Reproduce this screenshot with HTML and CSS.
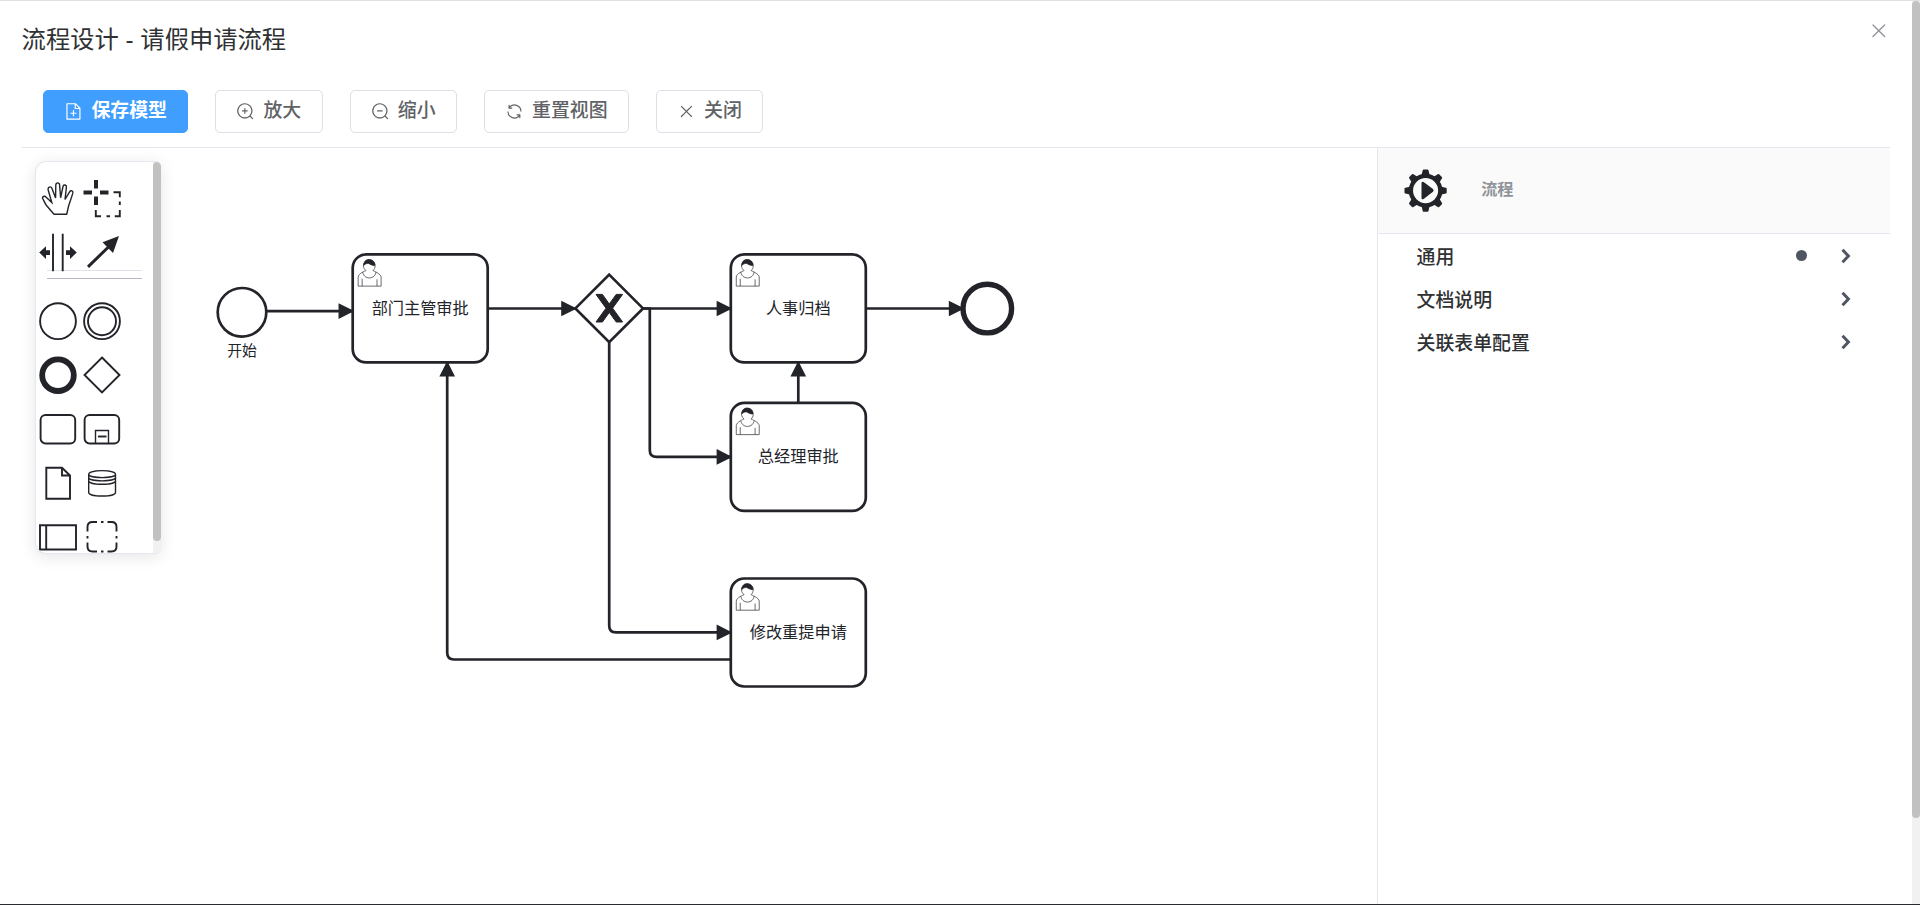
FILE: index.html
```html
<!DOCTYPE html>
<html lang="zh-CN">
<head>
    <meta charset="UTF-8" />
    <meta name="viewport" content="width=device-width, initial-scale=1.0" />
    <title>流程设计</title>
    <link rel="stylesheet" href="styles.css">
</head>
<body>
<div class="dialog">
    <div class="dialog-content">
        <header class="dialog-header">
            <h1 class="dialog-title">流程设计 - 请假申请流程</h1>
            <button class="dialog-close" aria-label="close">
                <svg viewBox="0 0 1024 1024"><path d="M764.288 214.592 512 466.88 259.712 214.592a31.936 31.936 0 0 0-45.12 45.12L466.752 512 214.528 764.224a31.936 31.936 0 1 0 45.12 45.184L512 557.184l252.288 252.288a31.936 31.936 0 0 0 45.12-45.12L557.12 512.064l252.288-252.352a31.936 31.936 0 1 0-45.12-45.184z"/></svg>
            </button>
        </header>

        <div class="toolbar">
            <button class="btn btn-primary">
                <svg viewBox="0 0 1024 1024"><path d="M832 384H576V128H192v768h640zm-26.496-64L640 154.496V320zM160 64h480l256 256v608a32 32 0 0 1-32 32H160a32 32 0 0 1-32-32V96a32 32 0 0 1 32-32m320 512V448h64v128h128v64H544v128h-64V640H352v-64z"/></svg>
                <span>保存模型</span>
            </button>
            <button class="btn">
                <svg viewBox="0 0 1024 1024"><path d="m795.904 750.72 124.992 124.928a32 32 0 0 1-45.248 45.248L750.656 795.904a416 416 0 1 1 45.248-45.248zM480 832a352 352 0 1 0 0-704 352 352 0 0 0 0 704m-32-384v-96a32 32 0 0 1 64 0v96h96a32 32 0 0 1 0 64h-96v96a32 32 0 0 1-64 0v-96h-96a32 32 0 0 1 0-64z"/></svg>
                <span>放大</span>
            </button>
            <button class="btn">
                <svg viewBox="0 0 1024 1024"><path d="m795.904 750.72 124.992 124.928a32 32 0 0 1-45.248 45.248L750.656 795.904a416 416 0 1 1 45.248-45.248zM480 832a352 352 0 1 0 0-704 352 352 0 0 0 0 704M352 448h256a32 32 0 0 1 0 64H352a32 32 0 0 1 0-64"/></svg>
                <span>缩小</span>
            </button>
            <button class="btn">
                <svg viewBox="0 0 1024 1024"><path d="M771.776 794.88A384 384 0 0 1 128 512h64a320 320 0 0 0 555.712 216.448H654.72a32 32 0 1 1 0-64h149.056a32 32 0 0 1 32 32v148.928a32 32 0 1 1-64 0v-50.56zM276.288 295.616h92.992a32 32 0 0 1 0 64H220.16a32 32 0 0 1-32-32V178.56a32 32 0 0 1 64 0v50.56A384 384 0 0 1 896.128 512h-64a320 320 0 0 0-555.776-216.384z"/></svg>
                <span>重置视图</span>
            </button>
            <button class="btn">
                <svg viewBox="0 0 1024 1024"><path d="M764.288 214.592 512 466.88 259.712 214.592a31.936 31.936 0 0 0-45.12 45.12L466.752 512 214.528 764.224a31.936 31.936 0 1 0 45.12 45.184L512 557.184l252.288 252.288a31.936 31.936 0 0 0 45.12-45.12L557.12 512.064l252.288-252.352a31.936 31.936 0 1 0-45.12-45.184z"/></svg>
                <span>关闭</span>
            </button>
        </div>

        <main class="designer">
            <div class="canvas">
                <svg class="diagram" viewBox="22 148 1355 756">
                    <defs>
                        <marker id="arrow" viewBox="0 0 20 20" refX="11" refY="10" markerWidth="27" markerHeight="27" markerUnits="userSpaceOnUse" orient="auto">
                            <path class="arrow-head" d="M 1 5 L 11 10 L 1 15 Z"/>
                        </marker>
                        <g id="user-task">
                            <rect class="shape" width="100" height="80" rx="10"/>
                            <path class="user-line" d="m 15,12 c 0.909,-0.845 1.594,-2.049 1.594,-3.385 0,-2.554 -1.805,-4.622 -4.357,-4.622 -2.552,0 -4.288,2.068 -4.288,4.622 0,1.348 0.974,2.562 1.896,3.405 -0.529,0.187 -5.669,2.097 -5.794,4.756 v 6.718 h 17 v -6.718 c 0,-2.298 -5.528,-4.595 -6.051,-4.776zm-8,6 l 0,5.5 m 11,0 l 0,-5"/>
                            <path class="user-line" d="m 15,12 m 2.162,1.009 c 0,2.447 -2.158,4.431 -4.821,4.431 -2.665,0 -4.822,-1.981 -4.822,-4.431"/>
                            <path class="user-hair" d="m 15,12 m -6.9,-3.80 c 0,0 2.251,-2.358 4.274,-1.177 2.024,1.181 4.221,1.537 4.124,0.965 -0.098,-0.57 -0.117,-3.791 -4.191,-4.136 -3.572,-0.308 -4.207,3.244 -4.207,4.348z"/>
                        </g>
                    </defs>

                    <!-- events -->
                    <circle class="event" cx="242" cy="312.3" r="24.3"/>
                    <circle class="event event-end" cx="987.3" cy="308.6" r="24.3"/>

                    <!-- gateway -->
                    <path class="event" d="M609.2 274.6 643 308.4 609.2 342.2 575.4 308.4Z"/>
                    <path class="gateway-x" d="M596 294.4h6.4l6.9 9.6 6.9-9.6h6.4l-10 13.8 10 13.8h-6.4l-6.9-9.6-6.9 9.6H596l10-13.8z"/>

                    <!-- tasks -->
                    <use href="#user-task" transform="translate(352.7 254.4) scale(1.35)"/>
                    <use href="#user-task" transform="translate(730.8 254.4) scale(1.35)"/>
                    <use href="#user-task" transform="translate(730.8 402.9) scale(1.35)"/>
                    <use href="#user-task" transform="translate(730.8 578.5) scale(1.35)"/>

                    <!-- sequence flows -->
                    <path class="flow" d="M266.3 311.1H352.7"/>
                    <path class="flow" d="M487.7 308.5H575.4"/>
                    <path class="flow" d="M643 308.5H730.8"/>
                    <path class="flow" d="M865.8 308.5H963"/>
                    <path class="flow" d="M643 308.5H649.8V450.2Q649.8 456.9 656.6 456.9H730.8"/>
                    <path class="flow" d="M609.2 342.2V625.7Q609.2 632.4 616 632.4H730.8"/>
                    <path class="flow" d="M798.3 402.9V362.4"/>
                    <path class="flow" d="M730.8 659.5H454Q447.2 659.5 447.2 652.8V362.4"/>

                    <text class="event-label" x="242" y="355.8">开始</text>
                    <text class="task-label" x="420.2" y="314">部门主管审批</text>
                    <text class="task-label" x="798.3" y="314">人事归档</text>
                    <text class="task-label" x="798.3" y="462">总经理审批</text>
                    <text class="task-label" x="798.3" y="638">修改重提申请</text>
                </svg>

                <div class="palette">
                    <div class="palette-entries">
                        <div class="palette-group">
                            <svg class="entry" viewBox="0 0 40 40"><path class="line thin" d="M16 35.2 8.5 26.5C6.8 24.4 5.7 21 4.7 19.6 3.7 17.6 6.7 16.5 8.2 18.2L13.8 23.5 10.2 11C9.5 8 12.8 6.6 14 9.6L17.6 19 17.8 6C18 3.1 21.4 3.1 21.6 6L22.6 18.8 25 7.5C25.6 5 28.8 5.6 28.4 8.5L27 20.5 31.6 12.8C32.8 10.8 35.6 11.8 34.8 14.4L30.6 27 28.7 35.2Z"/></svg>
                            <svg class="entry" viewBox="0 0 40 40"><path class="fill" d="M12 1h4v8.5h-4zM12 17.5h4V26h-4zM1.5 11.5H10v4H1.5zM18 11.5h8.5v4H18z"/><path class="line" d="M31.5 13.2h6.3v5M37.8 22.5V26M37.8 31v6.3h-5M28 37.3h-3.5M19 37.3h-5.2V31"/></svg>
                            <svg class="entry" viewBox="0 0 40 40"><path class="line" d="M15 .8v37.4M24.7.8v37.4"/><path class="fill" d="M1.2 19.5 8 13.3v4h4v4.6H8v4zM38.8 19.5 32 13.3v4h-4v4.6h4v4z"/></svg>
                            <svg class="entry" viewBox="0 0 40 40"><path class="line bold" d="M6 33.8 28 12.5"/><path class="fill" d="M37 3 31 20 20.5 9.3z"/></svg>
                        </div>
                        <hr class="separator">
                        <div class="palette-group">
                            <svg class="entry" viewBox="0 0 40 40"><circle class="line" cx="20" cy="20.2" r="17.9"/></svg>
                            <svg class="entry" viewBox="0 0 40 40"><circle class="line" cx="20" cy="20.2" r="17.9"/><circle class="line" cx="20" cy="20.2" r="14"/></svg>
                            <svg class="entry" viewBox="0 0 40 40"><circle class="line heavy" cx="20" cy="20.2" r="15.8"/></svg>
                            <svg class="entry" viewBox="0 0 40 40"><path class="line" d="M20 2.5 37.5 20 20 37.5 2.5 20Z"/></svg>
                            <svg class="entry" viewBox="0 0 40 40"><rect class="line" x="2.6" y="6" width="34.6" height="28.5" rx="5"/></svg>
                            <svg class="entry" viewBox="0 0 40 40"><rect class="line" x="2.6" y="6" width="34.6" height="28.5" rx="5"/><path class="line thin" d="M13.5 34.5V21.5H26.5V34.5"/><path class="line" d="M16 27.5h8.5"/></svg>
                            <svg class="entry" viewBox="0 0 40 40"><path class="line" d="M8.3 4.7H24L32 12.5V35.7H8.3ZM24 4.7v7.8h8"/></svg>
                            <svg class="entry" viewBox="0 0 40 40"><path class="line thin" d="M6.7 11.5V29.5C6.7 34.2 33.5 34.2 33.5 29.5V11.5C33.5 6.3 6.7 6.3 6.7 11.5C6.7 15.6 33.5 15.6 33.5 11.5M6.7 14.5C6.7 19 33.5 19 33.5 14.5M6.7 17.7C6.7 22.4 33.5 22.4 33.5 17.7"/></svg>
                            <svg class="entry" viewBox="0 0 40 40"><path class="line" d="M2 8.2H38V32.5H2ZM8.2 8.2V32.5"/></svg>
                            <svg class="entry" viewBox="0 0 40 40"><path class="line" d="M5.5 14.5V10Q5.5 5 10.5 5H15M25.5 5H29.5Q34.5 5 34.5 10V14.5M34.5 25.5V29.5Q34.5 34.5 29.5 34.5H25.5M15 34.5H10.5Q5.5 34.5 5.5 29.5V25.5M19 5h2.5M19 34.5h2.5M5.5 19v2.5M34.5 19v2.5"/></svg>
                        </div>
                    </div>
                    <div class="scroll-track"><div class="palette-thumb"></div></div>
                </div>
            </div>

            <aside class="panel">
                <div class="panel-header">
                    <svg class="gear" viewBox="0 0 44 44">
                        <path id="tooth" d="M17.5 8 19 1.5Q19.2.5 20 .5H24Q24.8.5 25 1.5L26.5 8Z"/>
                        <use href="#tooth" transform="rotate(45 22 22)"/>
                        <use href="#tooth" transform="rotate(90 22 22)"/>
                        <use href="#tooth" transform="rotate(135 22 22)"/>
                        <use href="#tooth" transform="rotate(180 22 22)"/>
                        <use href="#tooth" transform="rotate(225 22 22)"/>
                        <use href="#tooth" transform="rotate(270 22 22)"/>
                        <use href="#tooth" transform="rotate(315 22 22)"/>
                        <circle class="gear-ring" cx="22" cy="22" r="15"/>
                        <path d="M17.8 14.7Q17.8 12 20 13.3L29.5 20.5Q31 22 29.5 23.2L20 30.5Q17.8 31.7 17.8 29.5Z"/>
                    </svg>
                    <span class="panel-type">流程</span>
                </div>
                <div class="group">
                    <span class="group-title">通用</span>
                    <span class="dot"></span>
                    <svg class="chevron" viewBox="0 0 10 16"><path d="M1.5 1.8 7.4 8 1.5 14.2"/></svg>
                </div>
                <div class="group">
                    <span class="group-title">文档说明</span>
                    <svg class="chevron" viewBox="0 0 10 16"><path d="M1.5 1.8 7.4 8 1.5 14.2"/></svg>
                </div>
                <div class="group">
                    <span class="group-title">关联表单配置</span>
                    <svg class="chevron" viewBox="0 0 10 16"><path d="M1.5 1.8 7.4 8 1.5 14.2"/></svg>
                </div>
            </aside>
        </main>
    </div>
    <div class="scroll-track"><div class="page-thumb"></div></div>
</div>
</body>
</html>
```
FILE: styles.css
```css
:root {
    --primary: #409eff;
    --text: #303133;
    --text-regular: #606266;
    --border: #dcdfe6;
    --line: #e4e7ed;
    --ink: #22242a;
    --font: "Liberation Sans", "Noto Sans CJK SC", sans-serif;
}

*, *::before, *::after { box-sizing: border-box; margin: 0; }

body {
    height: 100vh;
    overflow: hidden;
    background: #fff;
    color: var(--text);
    font-family: var(--font);
}

.dialog {
    display: flex;
    height: 100vh;
    border-top: 1px solid #dfdfdf;
    border-bottom: 1px solid #2a2b2e;
}
.dialog-content {
    flex: 1;
    min-width: 0;
    display: flex;
    flex-direction: column;
    padding: 0 22px 0 21.6px;
}

.dialog-header {
    display: flex; justify-content: space-between;
    height: 88px;
}
.dialog-title {
    padding-top: 23px;
    font-size: 24.3px; font-weight: 400; line-height: 32px;
}
.dialog-close {
    width: 21.6px; height: 21.6px;
    margin-top: 19px;
    padding: 0; border: 0; background: none;
}
.dialog-close svg { display: block; width: 21.6px; height: 21.6px; fill: #909399; }

.toolbar {
    display: flex; gap: 27px;
    height: 59px;
    padding: 1px 21.6px 0;
    border-bottom: 1px solid var(--line);
}
.btn {
    display: flex; align-items: center;
    height: 43px;
    padding: 0 20.25px;
    border: 1px solid var(--border);
    border-radius: 5px;
    background: #fff;
    color: var(--text-regular);
    font-family: var(--font);
    font-size: 18.9px; font-weight: 500; line-height: 1;
}
.btn svg { width: 18.9px; height: 18.9px; fill: currentColor; }
.btn span { margin-left: 8.1px; padding-bottom: 1px; }
.btn-primary {
    border-color: var(--primary);
    background: var(--primary);
    color: #fff;
    font-weight: 700;
}

.designer { flex: 1; display: flex; min-height: 0; }

.canvas { position: relative; flex: 1; min-width: 0; }
.diagram { display: block; width: 1355px; height: 756px; }
.shape, .event { fill: #fff; stroke: var(--ink); stroke-width: 2; }
.event { stroke-width: 2.7; }
.event-end { stroke-width: 5.4; }
.flow {
    fill: none; stroke: var(--ink); stroke-width: 2.7;
    marker-end: url(#arrow);
}
.arrow-head { fill: var(--ink); stroke: var(--ink); stroke-width: 1; }
.gateway-x { fill: var(--ink); stroke: var(--ink); stroke-width: 1; }
.user-line { fill: #fff; stroke: var(--ink); stroke-width: 0.5; }
.user-hair { fill: var(--ink); stroke: var(--ink); stroke-width: 0.5; }
.task-label, .event-label {
    fill: var(--ink);
    font-size: 16.2px;
    text-anchor: middle;
}
.event-label { font-size: 14.85px; }

/* palette floats over the canvas */
.palette {
    position: absolute; left: 13.4px; top: 13px;
    display: flex;
    width: 126px; height: 393px;
    border: 1px solid var(--line);
    border-right: 0;
    border-radius: 11px 5px 5px 11px;
    background: #fff;
    box-shadow: 0 3px 16px rgba(0, 0, 0, 0.1);
    overflow: hidden;
}
.palette-entries { flex: 1; padding-top: 10px; overflow: hidden; }
.palette-group {
    display: grid;
    grid-template-columns: repeat(2, 43.7px);
    grid-auto-rows: 54px;
    align-items: center; justify-items: center;
}
.entry { width: 40px; height: 40px; overflow: visible; }
.line { fill: none; stroke: var(--ink); stroke-width: 1.9; }
.thin { stroke-width: 1.4; }
.bold { stroke-width: 3; }
.heavy { stroke-width: 5.8; }
.fill { fill: var(--ink); }
.separator {
    height: 9px;
    margin: -10px 11px 14.5px;
    border: 0;
    border-top: 1px solid #e0e3ea;
    border-bottom: 1px solid #b3b7c6;
}

.scroll-track { width: 8px; background: #f1f1f1; }
.palette-thumb { height: 379px; border-radius: 4px; background: #c1c1c1; }
.page-thumb { height: 817px; border-radius: 4px; background: #c1c1c1; }

.panel { width: 513px; border-left: 1px solid var(--line); }
.panel-header {
    display: flex; align-items: center;
    height: 86px;
    padding-left: 26px;
    border-bottom: 1px solid var(--line);
    background: #fafafa;
}
.gear { width: 43.2px; height: 43.2px; fill: var(--ink); }
.gear-ring { fill: #fafafa; stroke: var(--ink); stroke-width: 4.4; }
.panel-type {
    margin-left: 34px; padding-bottom: 2px;
    color: #909399;
    font-size: 16.2px; font-weight: 700; line-height: 1;
}
.group {
    display: flex; align-items: center;
    height: 43.2px;
    padding: 0 39px 0 38.5px;
}
.group-title {
    flex: 1;
    padding-top: 5px;
    font-size: 18.9px; font-weight: 500; line-height: 1;
}
.dot {
    width: 11px; height: 11px;
    margin-right: 34px;
    border-radius: 50%;
    background: #505562;
}
.chevron { width: 10px; height: 16px; fill: none; stroke: #505562; stroke-width: 3; }
```
